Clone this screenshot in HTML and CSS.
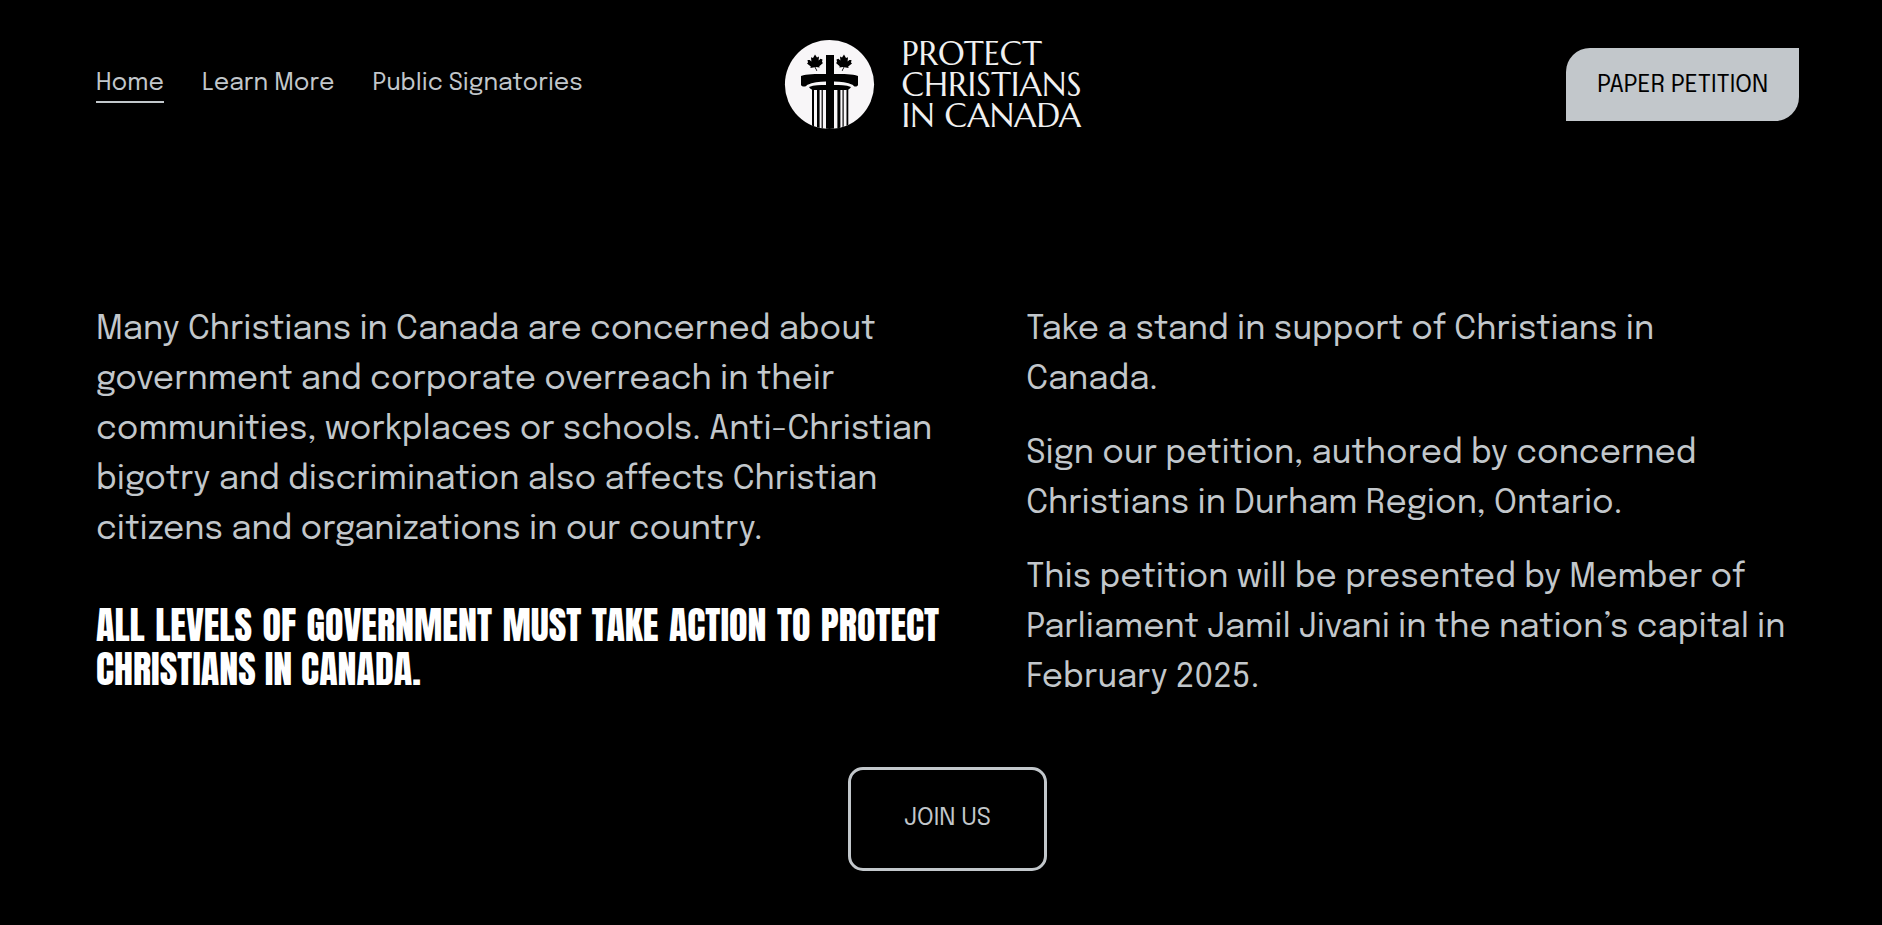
FILE: index.html
```html
<!DOCTYPE html>
<html lang="en">
<head>
<meta charset="utf-8">
<meta name="viewport" content="width=device-width, initial-scale=1">
<title>Protect Christians in Canada</title>
<link rel="stylesheet" href="styles.css">
</head>
<body>
<header class="header">
  <nav class="nav" aria-label="Main">
    <a class="nav-link nav-link-active" href="#home" aria-current="page">Home</a>
    <a class="nav-link" href="#learn-more">Learn More</a>
    <a class="nav-link" href="#signatories">Public Signatories</a>
  </nav>
  <a class="logo" href="#home">
    <svg class="logo-mark" viewBox="3 4 91 91" aria-hidden="true">
      <defs>
        <clipPath id="disc"><circle cx="48.5" cy="49.5" r="44.6"/></clipPath>
        <path id="leaf" d="M0-7.5 2-4.5 4-5.500 3.600-1.500 5.600-3.200 7.500-2.500 7 0 8 1 4.300 4.200 4.600 5.500 1 5 .4 5 2.300 8.800 1.600 9-.4 5.200-4.600 6-4.200 4.600-8 1.500-7 .6-7.500-2-5.300-2-3.600-.6-4-4.800-2-4Z"/>
      </defs>
      <circle cx="48.500" cy="49.500" r="44.600" fill="#f8f6f8"/>
      <g clip-path="url(#disc)">
        <path d="M45 20h8v19c10 0 18 0 24 2v9c-1 2-4 2-5 0-6-3-12-3.500-19-3.500v3.500c6 0 12 0 17 2-1 2-3 3-5 3H33c-2 0-4-1-5-3 5-2 11-2 17-2v-3.500c-7 0-13 .5-19 3.500-1 2-5 2-6 0v-9c6-2 14-2 25-2Z"/>
        <path d="M45 48h8v48h-8ZM31 54h2v42h-2ZM36 54h2.600v42H36ZM40.600 54h1.200v42h-1.200ZM56.400 54h3v42h-3ZM61.500 54h1.200v42h-1.200ZM65.500 54h1.800v42h-1.800Z"/>
        <use href="#leaf" x="34" y="27"/>
        <use href="#leaf" transform="translate(63 27) scale(-1 1)"/>
      </g>
    </svg>
    <span class="logo-text">PROTECT<br>CHRISTIANS<br>IN CANADA</span>
  </a>
  <a class="petition" href="#petition">PAPER PETITION</a>
</header>
<main class="main">
  <div class="columns">
    <section class="lead">
      <p>Many Christians in Canada are concerned about government and corporate overreach in their communities, workplaces or schools. Anti-Christian bigotry and discrimination also affects Christian citizens and organizations in our country.</p>
      <h1 class="headline">ALL LEVELS OF GOVERNMENT MUST TAKE ACTION TO PROTECT CHRISTIANS IN CANADA.</h1>
    </section>
    <section class="details">
      <p>Take a stand in support of Christians in<br>Canada.</p>
      <p>Sign our petition, authored by concerned Christians in Durham Region, Ontario.</p>
      <p>This petition will be presented by Member of Parliament Jamil Jivani in the nation’s capital in February 2025.</p>
    </section>
  </div>
  <a class="join" href="#join">JOIN US</a>
</main>
</body>
</html>
```
FILE: styles.css
```css
* { box-sizing: border-box; }
body {
  margin: 0;
  background: #000;
  color: #c2c7cb;
  font-family: Epilogue, Inter, "Liberation Sans", sans-serif;
  font-size: 33px;
  line-height: 50px;
}
a { color: inherit; text-decoration: none; }
p, h1 { margin: 0; }
.header {
  display: grid;
  grid-template-columns: 1fr auto 1fr;
  align-items: center;
  padding: 38px 83px 36px 96px;
}
.nav { display: flex; gap: 38px; }
.nav-link {
  font-size: 24px;
  line-height: 35px;
  border-bottom: 2px solid transparent;
}
.nav-link-active { border-color: #c2c7cb; }
.logo {
  display: flex;
  align-items: center;
  gap: 27px;
  padding-right: 30px;
}
.logo-mark { width: 91px; height: 91px; }
.logo-text {
  font-family: Marcellus, Lato, sans-serif;
  font-size: 33px;
  line-height: 31px;
  color: #f0f0f0;
}
.petition {
  justify-self: end;
  padding: 20px 31px 17px;
  border-radius: 24px 0;
  background: #c2c7cb;
  color: #000;
  font-size: 24px;
  line-height: 36px;
}
.main {
  display: flex;
  flex-direction: column;
  align-items: center;
  padding: 138px 83px 56px 96px;
}
.columns {
  display: grid;
  grid-template-columns: 12fr 11fr;
  gap: 87px;
  width: 100%;
}
.details { display: grid; gap: 24px; align-content: start; }
.headline {
  margin-top: 48px;
  color: #fff;
  font-family: Anton, Roboto, sans-serif;
  font-size: 38px;
  font-weight: 400;
  line-height: 44px;
  text-align: justify;
}
.join {
  margin-top: 64px;
  padding: 31px 53px;
  border: 3px solid #c2c7cb;
  border-radius: 15px;
  font-size: 24px;
  line-height: 36px;
}
```
